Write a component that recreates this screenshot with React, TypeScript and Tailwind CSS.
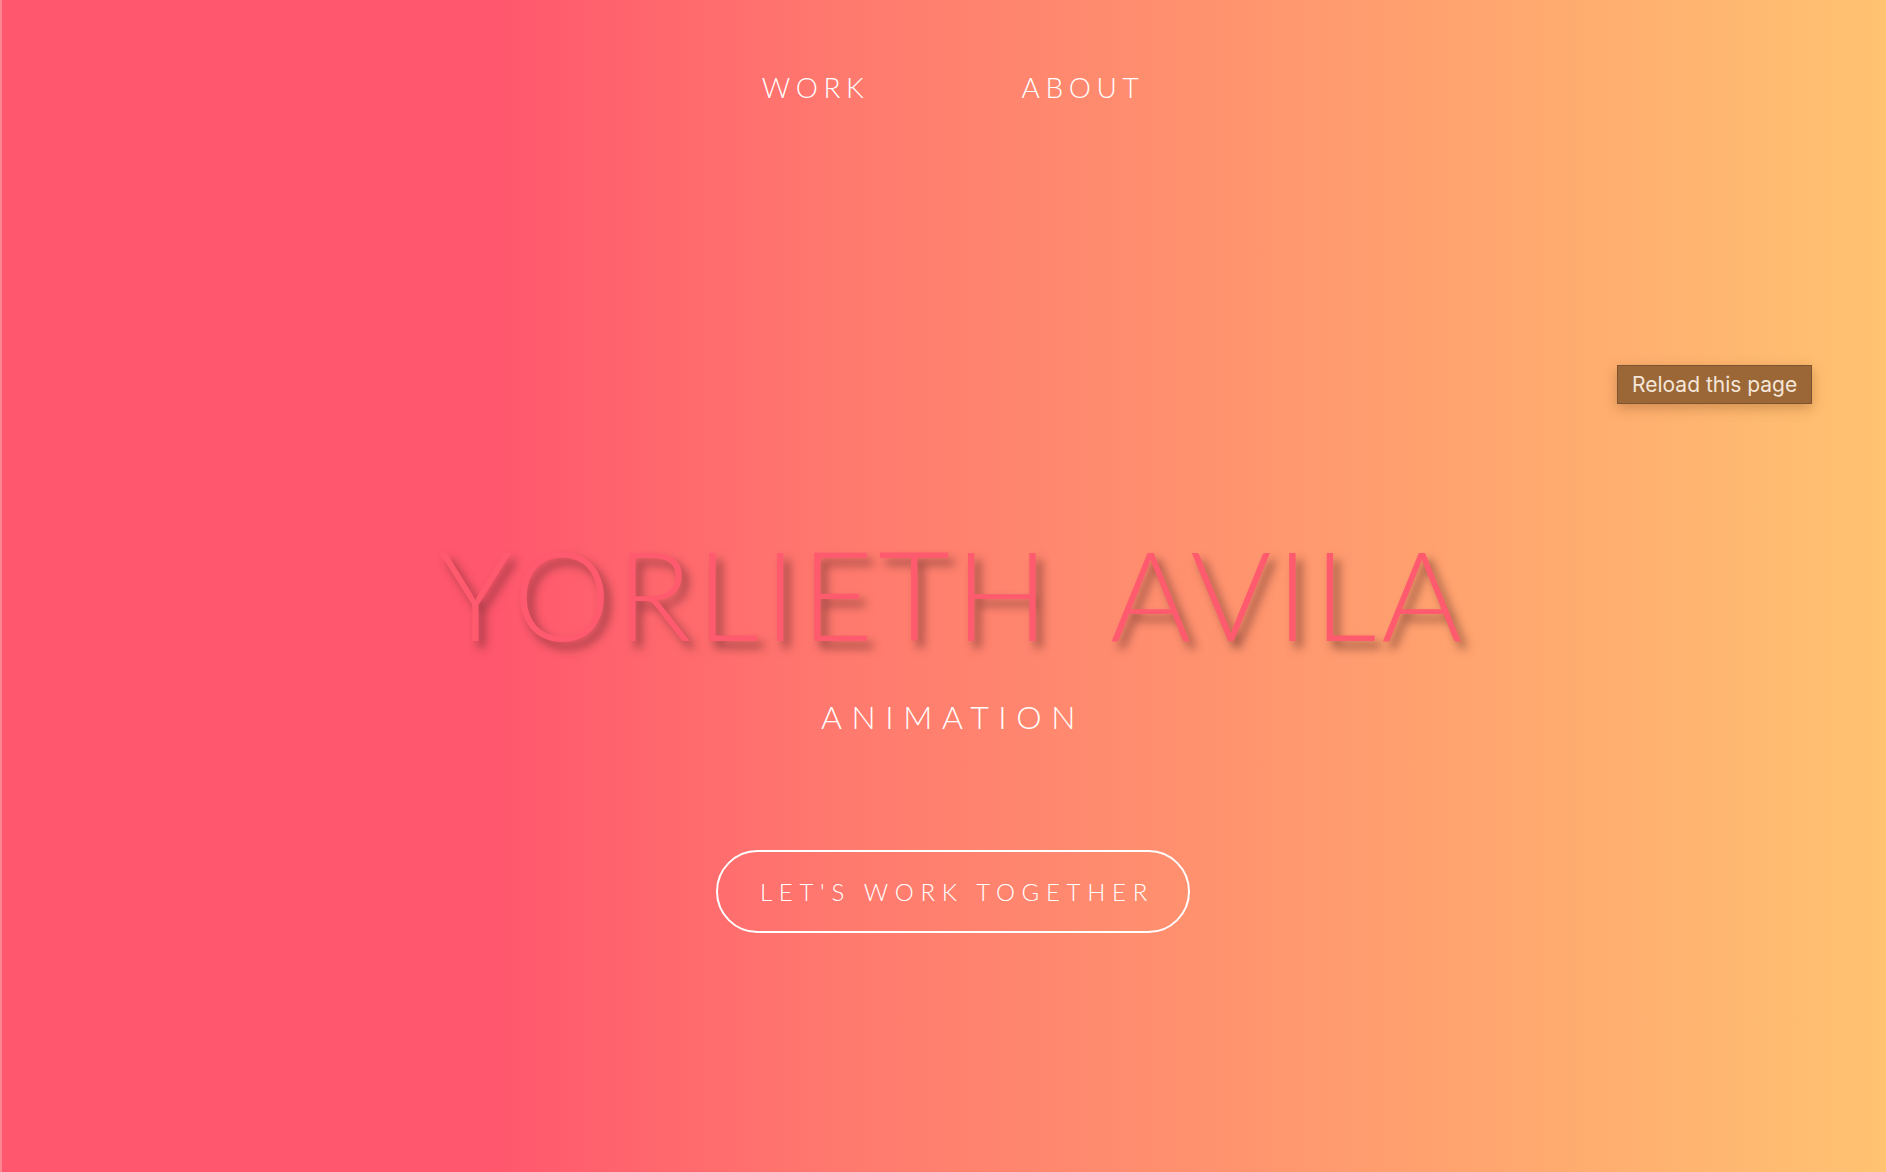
export default function App() {
  const font = { fontFamily: '"Lato", "Noto Sans", sans-serif' }
  return (
    <div
      className="relative flex h-[1172px] w-full flex-col items-center overflow-hidden border-l-2 border-[#ff8590] bg-[linear-gradient(90deg,#ff576d_0%,#ff576d_26%,#ff7a6e_45%,#ffa06f_75%,#ffc371_100%)] pl-[18px]"
      style={font}
    >
      {/* NAV */}
      <nav className="mt-[73px] flex gap-[152px] text-[28px] font-light tracking-[0.2em] text-white">
        <a className="leading-none">WORK</a>
        <a className="leading-none">ABOUT</a>
      </nav>

      {/* HERO */}
      <div className="mt-[430px] flex flex-col items-center">
        <h1 className="text-[124px] leading-none font-light tracking-[0.04em] [word-spacing:22px] text-[#ff5a6e] [text-shadow:6px_7px_10px_rgba(70,30,30,0.55)]">
          YORLIETH AVILA
        </h1>
        <p className="mt-[46px] text-[32px] leading-none font-light tracking-[0.3em] text-white">
          ANIMATION
        </p>
        <button className="mt-[117px] flex h-[83px] w-[474px] items-center justify-center rounded-full border-2 border-white pl-[8px] text-[24px] font-light tracking-[0.28em] text-white">
          LET'S WORK TOGETHER
        </button>
      </div>

      {/* browser tooltip */}
      <div
        className="absolute top-[365px] left-[1615px] border border-[#7d5230] bg-[#9b6736] px-[14px] py-[4px] text-[21px] leading-[29px] text-[#f4e6da] shadow-[0_4px_12px_rgba(120,70,20,0.35)]"
        style={{ fontFamily: '"Inter", "Noto Sans", sans-serif' }}
      >
        Reload this page
      </div>
    </div>
  )
}
